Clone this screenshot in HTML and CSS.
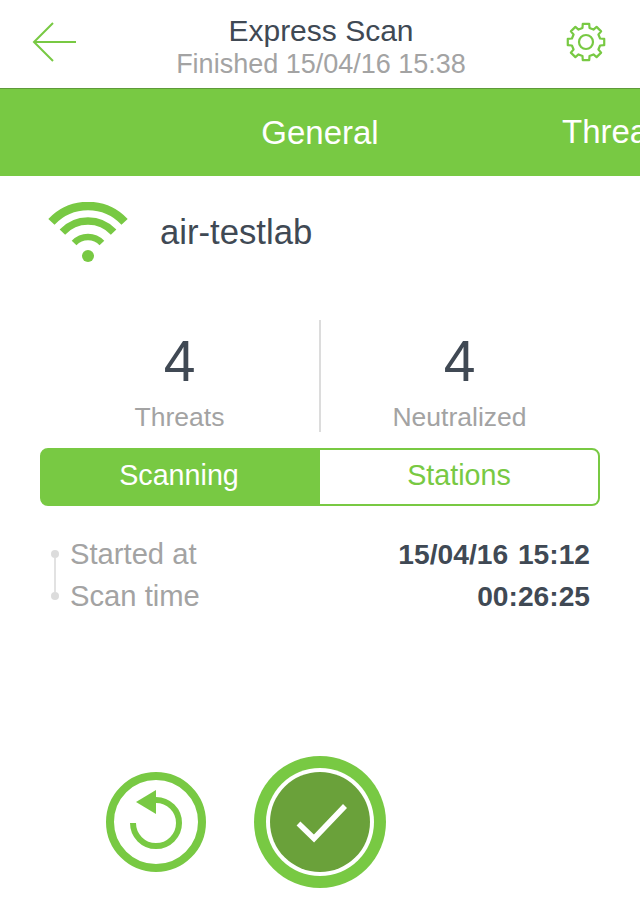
FILE: index.html
```html
<!DOCTYPE html>
<html lang="en">
<head>
<meta charset="utf-8">
<title>Express Scan</title>
<link rel="stylesheet" href="styles.css">
</head>
<body>
<div class="app">
  <header class="topbar">
    <svg class="back" viewBox="0 0 44 40" aria-hidden="true"><path d="M21 1 2 20 21 39M2 20H44"/></svg>
    <div class="heading">
      <div class="title">Express Scan</div>
      <div class="subtitle">Finished 15/04/16 15:38</div>
    </div>
    <svg class="gear" viewBox="-20 -20 40 40" aria-hidden="true">
      <polygon points="-3.51,-14.07 -3.21,-18.22 3.21,-18.22 3.51,-14.07 7.47,-12.43 10.61,-15.15 15.15,-10.61 12.43,-7.47 14.07,-3.51 18.22,-3.21 18.22,3.21 14.07,3.51 12.43,7.47 15.15,10.61 10.61,15.15 7.47,12.43 3.51,14.07 3.21,18.22 -3.21,18.22 -3.51,14.07 -7.47,12.43 -10.61,15.15 -15.15,10.61 -12.43,7.47 -14.07,3.51 -18.22,3.21 -18.22,-3.21 -14.07,-3.51 -12.43,-7.47 -15.15,-10.61 -10.61,-15.15 -7.47,-12.43"/>
      <circle r="7"/>
    </svg>
  </header>
  <nav class="tabs">
    <span class="tab-active">General</span>
    <span class="tab-next">Threats</span>
  </nav>
  <section class="network">
    <svg class="wifi" viewBox="0 0 80 60" aria-hidden="true">
      <path class="arc1" d="M3.43 19.9A50 50 0 0 1 76.57 19.9"/>
      <path class="arc2" d="M14.4 30.1A35 35 0 0 1 65.6 30.1"/>
      <path class="arc3" d="M26.1 41A19 19 0 0 1 53.9 41"/>
      <circle cx="40" cy="54" r="6"/>
    </svg>
    <span class="ssid">air-testlab</span>
  </section>
  <section class="stats">
    <div class="stat">
      <div class="stat-num">4</div>
      <div class="stat-label">Threats</div>
    </div>
    <div class="stat stat-right">
      <div class="stat-num">4</div>
      <div class="stat-label">Neutralized</div>
    </div>
  </section>
  <div class="toggle">
    <div class="seg seg-on">Scanning</div>
    <div class="seg">Stations</div>
  </div>
  <section class="details">
    <div class="track"><i class="track-dot"></i><i class="track-line"></i><i class="track-dot"></i></div>
    <div class="rows">
      <div class="row"><span class="row-key">Started at</span><span class="row-val">15/04/16 15:12</span></div>
      <div class="row"><span class="row-key">Scan time</span><span class="row-val">00:26:25</span></div>
    </div>
  </section>
  <footer class="actions">
    <svg class="redo" viewBox="0 0 100 100" aria-hidden="true">
      <circle class="redo-ring" cx="50" cy="50" r="46"/>
      <path class="redo-arc" d="M27 51A23 23 0 1 0 50 28"/>
      <polygon class="redo-head" points="30,30 50,18 50,42"/>
    </svg>
    <svg class="done" viewBox="0 0 132 132" aria-hidden="true">
      <circle class="done-outer" cx="66" cy="66" r="66"/>
      <circle class="done-gap" cx="66" cy="66" r="54"/>
      <circle class="done-inner" cx="66" cy="66" r="50"/>
      <path class="done-check" d="M44.5 67.5 60 82.5 91 50"/>
    </svg>
  </footer>
</div>
</body>
</html>
```
FILE: styles.css
```css
* { box-sizing: border-box; }
html, body { margin: 0; padding: 0; background: #fff; }
body { font-family: "Liberation Sans", Arial, sans-serif; font-weight: 400; color: #404954; }
.app { width: 640px; height: 920px; overflow: hidden; display: flex; flex-direction: column; }

.topbar { height: 88px; display: flex; align-items: center; justify-content: space-between; padding: 0 34px 4px 32px; }
.back { width: 44px; height: 40px; fill: none; stroke: #78c943; stroke-width: 2; }
.heading { text-align: center; align-self: flex-start; padding-top: 14px; }
.title { font-size: 30px; line-height: 34px; }
.subtitle { font-size: 27px; line-height: 30px; margin-top: 1px; color: #a3a3a3; }
.gear { width: 40px; height: 40px; fill: none; stroke: #78c943; stroke-width: 2.2; stroke-linejoin: round; }

.tabs { height: 88px; background: #78c943; border-top: 1px solid #5f9a3a; position: relative; overflow: hidden; color: #fff; font-size: 33px; display: flex; justify-content: center; align-items: center; }
.tab-next { position: absolute; left: 562px; top: 24px; white-space: nowrap; }

.network { height: 112px; padding: 26px 0 0 48px; display: flex; align-items: flex-start; gap: 32px; }
.wifi { width: 80px; height: 60px; flex: none; fill: #78c943; }
.wifi path { fill: none; stroke: #78c943; }
.arc1 { stroke-width: 8.5; }
.arc2 { stroke-width: 7.5; }
.arc3 { stroke-width: 6.5; }
.ssid { font-size: 34.7px; line-height: 60px; }

.stats { margin: 32px 40px 0; height: 112px; display: flex; }
.stat { width: 279px; flex: none; height: 112px; text-align: center; }
.stat-right { width: 281px; border-left: 2px solid #dcdcdc; padding-right: 2px; }
.stat-num { font-size: 57px; line-height: 82px; }
.stat-label { font-size: 26.5px; line-height: 30px; color: #a3a3a3; }

.toggle { margin: 16px 40px 0; height: 58px; display: flex; border: 2px solid #78c943; border-radius: 8px; overflow: hidden; background: #78c943; }
.seg { width: 278px; flex: none; display: flex; align-items: center; justify-content: center; font-size: 28.7px; color: #78c943; padding-bottom: 3px; background: #fff; }
.seg-on { background: #78c943; color: #fff; padding-right: 4px; }

.details { margin: 27px 50px 0 51px; display: flex; gap: 11px; }
.track { width: 8px; display: flex; flex-direction: column; align-items: center; padding-top: 17px; }
.track-dot { width: 8px; height: 8px; border-radius: 50%; background: #dcdcdc; flex: none; }
.track-line { width: 2px; height: 34px; background: #e2e2e2; flex: none; }
.rows { flex: 1; display: flex; flex-direction: column; }
.row { height: 42px; display: flex; align-items: center; justify-content: space-between; font-size: 29.2px; }
.row-key { color: #a3a3a3; }
.row-val { font-weight: 700; font-size: 28.2px; word-spacing: 2px; }

.actions { margin-top: 139px; padding-left: 106px; display: flex; align-items: center; gap: 48px; }
.redo { width: 100px; height: 100px; }
.redo-ring { fill: none; stroke: #78c943; stroke-width: 8; }
.redo-arc { fill: none; stroke: #78c943; stroke-width: 6; }
.redo-head { fill: #78c943; }
.done { width: 132px; height: 132px; }
.done-outer { fill: #78c943; }
.done-gap { fill: #fff; }
.done-inner { fill: #6aa13a; }
.done-check { fill: none; stroke: #fff; stroke-width: 5.5; }
```
